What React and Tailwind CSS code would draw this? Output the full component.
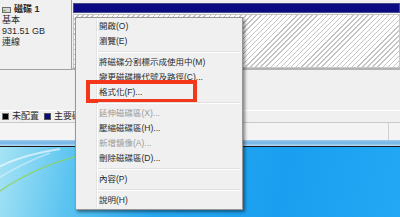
import React from 'react';

const font = { fontFamily: '"Liberation Sans","Noto Sans CJK TC",sans-serif' };

const menuItems = [
  { label: '開啟(O)' },
  { label: '瀏覽(E)' },
  { sep: true },
  { label: '將磁碟分割標示成使用中(M)' },
  { label: '變更磁碟機代號及路徑(C)...' },
  { label: '格式化(F)...', marked: true },
  { sep: true },
  { label: '延伸磁碟區(X)...', disabled: true },
  { label: '壓縮磁碟區(H)...' },
  { label: '新增鏡像(A)...', disabled: true },
  { label: '刪除磁碟區(D)...' },
  { sep: true },
  { label: '內容(P)' },
  { sep: true },
  { label: '說明(H)' },
];

const DiskIcon = () => (
  <svg width="9" height="6" viewBox="0 0 9 6" className="mr-[3px] mt-[1px]">
    <rect x="0.5" y="0.5" width="8" height="5" fill="#d8d8d8" stroke="#6d6d6d" />
    <rect x="1.5" y="3" width="2" height="1.2" fill="#3fae2a" />
  </svg>
);

const ContextMenu = () => (
  <div className="absolute left-[75px] top-[17px] w-[168px] border border-[#979797] bg-[#f0f0f0] py-[1px] shadow-[2px_2px_3px_rgba(0,0,0,0.45)]">
    <div className="absolute left-[20px] top-0 bottom-0 w-px bg-[#e2e3e3]" />
    <div className="absolute left-[21px] top-0 bottom-0 w-px bg-white" />
    {menuItems.map((item, i) =>
      item.sep ? (
        <div key={i} className="relative h-[6px] flex flex-col justify-center pl-[22px] pr-[2px]">
          <div className="h-px bg-[#e0e0e0]" />
          <div className="h-px bg-white" />
        </div>
      ) : (
        <div
          key={i}
          className={`relative h-[15px] flex items-center pl-[23px] text-[8.5px] leading-none ${
            item.disabled ? 'text-[#9a9a9a]' : 'text-[#2a2a2a]'
          }`}
        >
          {item.label}
          {item.marked && (
            <div className="absolute left-[10px] top-[-5px] bottom-[-3px] w-[111px] border-[4px] border-[#f4361a]" />
          )}
        </div>
      )
    )}
  </div>
);

export default function App() {
  return (
    <div className="relative w-[400px] h-[217px] overflow-hidden bg-[#f0f0f0] text-[#2a2a2a]" style={font}>
      <div className="flex h-[70px]">
        <div className="w-[72px] shrink-0 border-r border-b border-[#a0a0a0] pl-[2px] pt-[4px] text-[9px] leading-[11px]">
          <div className="flex items-center font-bold">
            <DiskIcon />
            磁碟 1
          </div>
          <div>基本</div>
          <div>931.51 GB</div>
          <div>連線</div>
        </div>
        <div className="flex-1 flex flex-col pt-[3px] pl-px border-b-2 border-[#b4b4b4]">
          <div className="h-[10px] bg-[#0a0a82] border border-[#4a4a8a]" />
          <div className="flex-1 mt-px border border-[#c8c8c8] bg-[image:repeating-linear-gradient(135deg,#ffffff_0px,#ffffff_2.6px,#c4c4c4_2.6px,#c4c4c4_3.6px)]" />
        </div>
      </div>

      <div className="h-[40px]" />

      <div className="h-[13px] border-t border-white border-b border-b-[#c8c8c8] flex items-center gap-[3px] pl-[2px] text-[9px] leading-none">
        <span className="w-[7px] h-[7px] bg-black border border-[#777]" />
        <span className="mr-[2px]">未配置</span>
        <span className="w-[7px] h-[7px] bg-[#0a0a82] border border-[#555]" />
        <span>主要磁碟分割</span>
      </div>

      <div className="h-[17px] flex bg-[#f4f4f4]">
        <div className="flex-1" />
        <div className="w-px bg-[#d0d0d0] mr-[11px]" />
      </div>

      <div className="h-[6px] bg-[linear-gradient(180deg,#9fcbec,#6fb4e6,#bcdcf2)]" />
      <div className="h-px bg-[#1a1a1a]" />

      <div className="relative h-[70px] bg-[linear-gradient(100deg,#a6e3f5_0%,#5cc4f0_18%,#26a8f0_40%,#1a9ff0_70%,#22a8f4_100%)]">
        <svg width="400" height="70" viewBox="0 0 400 70" className="absolute inset-0">
          <path d="M-5 22 Q20 8 60 2" stroke="#ffffff" strokeOpacity="0.6" strokeWidth="2" fill="none" />
          <path d="M0 30 Q25 15 50 6" stroke="#ffffff" strokeOpacity="0.4" strokeWidth="1.5" fill="none" />
          <path d="M0 44 Q35 20 78 9" stroke="#8ed45a" strokeWidth="1.2" fill="none" />
        </svg>
      </div>

      <ContextMenu />
    </div>
  );
}
